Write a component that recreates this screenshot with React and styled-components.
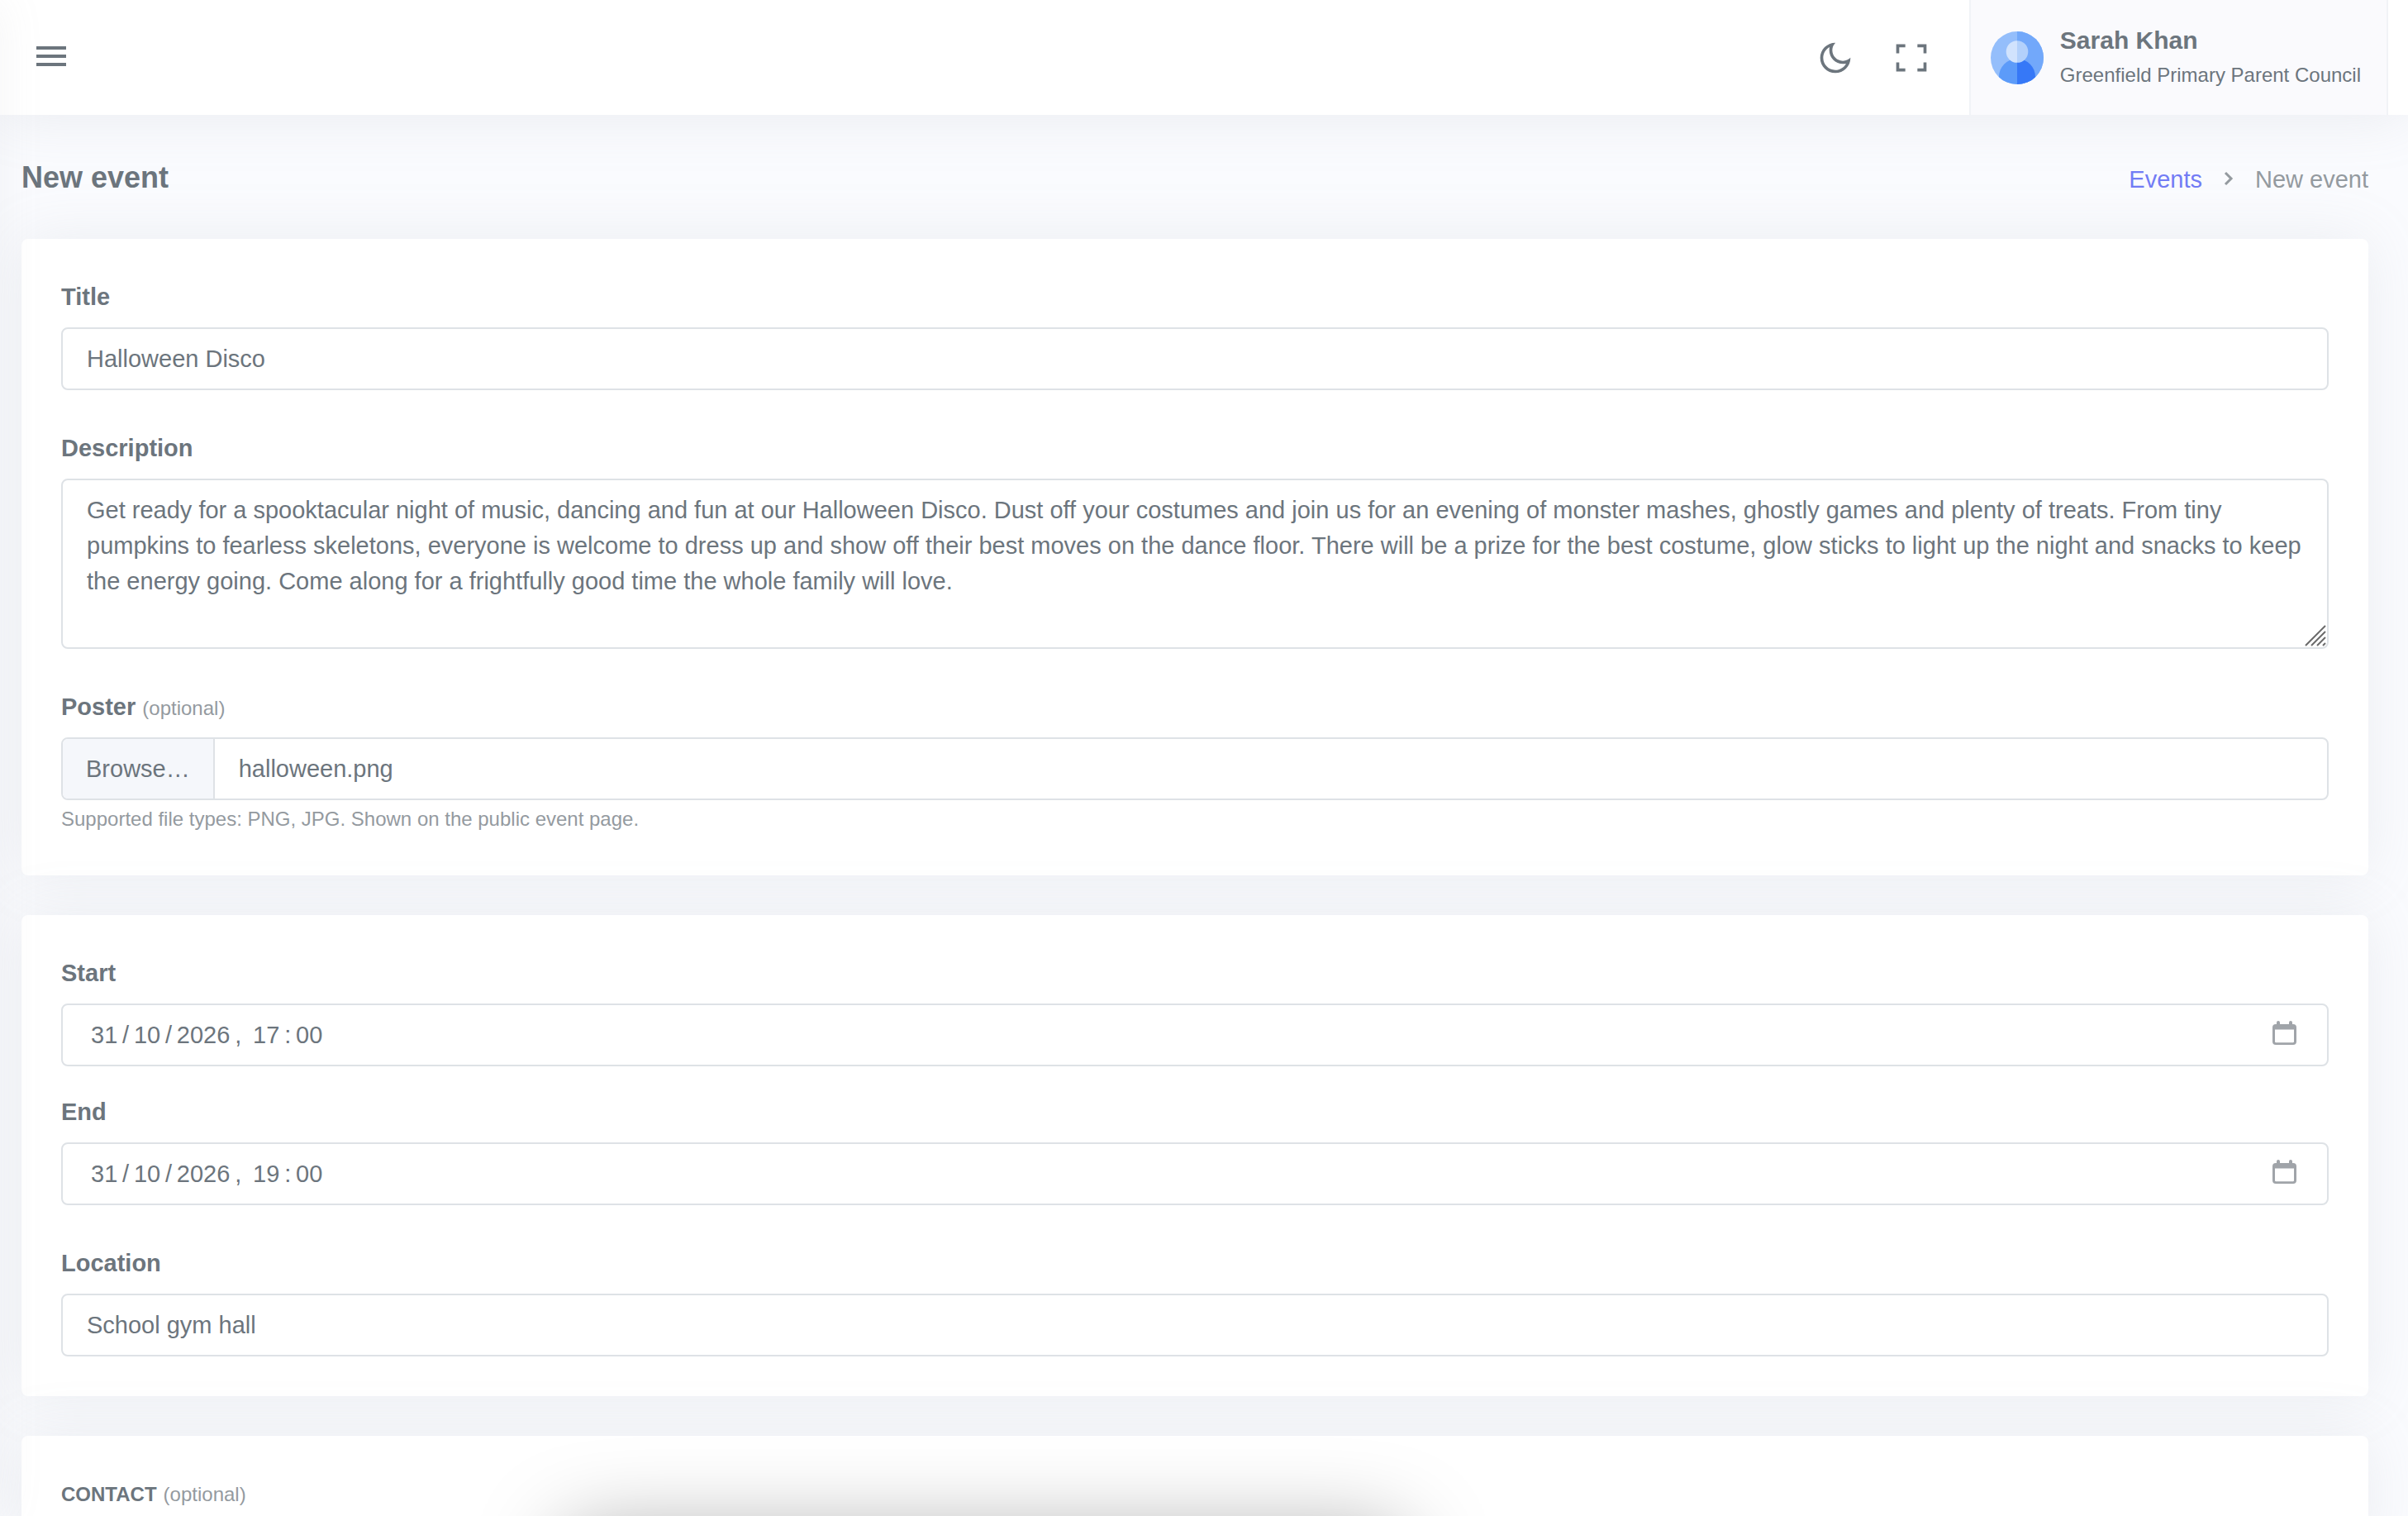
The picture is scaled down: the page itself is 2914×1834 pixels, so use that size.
import React, { useState } from "react";
import styled, { createGlobalStyle } from "styled-components";
import { RiFullscreenLine, RiMoonLine } from "react-icons/ri";

const color = {
  text: "#6c757d",
  muted: "#949a9f",
  border: "#dee2e6",
  link: "#727cf5",
  page: "#fafbfe",
};

const GlobalStyle = createGlobalStyle`
  *, *::before, *::after { box-sizing: border-box; }
  html { scrollbar-width: none; }
  body {
    margin: 0;
    background: ${color.page};
    color: ${color.text};
    font-family: "Liberation Sans", Arial, sans-serif;
    font-size: 29px;
    line-height: 43px;
  }
  input, textarea, button { font: inherit; color: inherit; }
`;

const Topbar = styled.header`
  position: relative;
  display: flex;
  align-items: center;
  height: 139px;
  padding: 0 24px 0 38px;
  background: #fff;
  box-shadow: 0 0 70px 0 rgba(154, 161, 171, 0.18);
`;

const IconButton = styled.button`
  display: flex;
  align-items: center;
  justify-content: center;
  width: 48px;
  height: 48px;
  padding: 0;
  border: 0;
  background: none;
  cursor: pointer;
`;

const TopActions = styled.div`
  display: flex;
  gap: 44px;
  margin-left: auto;
  margin-right: 46px;
`;

const Account = styled.button`
  display: flex;
  align-items: center;
  gap: 20px;
  height: 100%;
  padding: 0 31px 0 24px;
  border: 0 solid #f1f3f7;
  border-width: 0 2px;
  background: #fafafd;
  text-align: left;
  cursor: pointer;
`;

const AccountText = styled.span`
  display: flex;
  flex-direction: column;
  gap: 4px;
`;

const AccountName = styled.span`
  font-size: 30px;
  font-weight: 700;
  line-height: 38px;
`;

const AccountGroup = styled.span`
  font-size: 24px;
  line-height: 38px;
`;

const Page = styled.main`
  padding: 0 48px 48px 26px;
`;

const PageHead = styled.div`
  display: flex;
  align-items: baseline;
  justify-content: space-between;
  padding: 55px 0 51px;
  line-height: 42px;
`;

const PageTitle = styled.h1`
  margin: 0;
  font-size: 36px;
  font-weight: 700;
`;

const Breadcrumb = styled.nav`
  display: flex;
  align-items: center;
  gap: 24px;
  color: ${color.muted};
`;

const CrumbLink = styled.a`
  color: ${color.link};
  text-decoration: none;
`;

const Form = styled.form`
  display: flex;
  flex-direction: column;
  gap: 48px;
`;

const Card = styled.section`
  display: flex;
  flex-direction: column;
  gap: 48px;
  padding: 48px;
  border-radius: 8px;
  background: #fff;
  box-shadow: 0 0 70px 0 rgba(154, 161, 171, 0.15);
`;

const Pair = styled.div`
  display: flex;
  flex-direction: column;
  gap: 33px;
`;

const Field = styled.div`
  display: flex;
  flex-direction: column;
`;

const Label = styled.label`
  padding-top: 1px;
  margin-bottom: 15px;
  font-weight: 700;
`;

const Small = styled.span`
  color: ${(p) => (p.$strong ? color.text : color.muted)};
  font-size: 24px;
  font-weight: ${(p) => (p.$strong ? 700 : 400)};
  line-height: 1;
`;

const Heading = styled.h2`
  margin: 0;
  font-size: 29px;
  font-weight: 400;
`;

const Hint = styled.div``;

const TextInput = styled.input`
  width: 100%;
  height: 76px;
  padding: 0 29px;
  border: 2px solid ${color.border};
  border-radius: 8px;
  background: #fff;
  outline: 0;
`;

const TextArea = styled.textarea`
  display: block;
  width: 100%;
  height: 206px;
  padding: 15px 24px 15px 29px;
  border: 2px solid ${color.border};
  border-radius: 8px;
  background: #fff;
  outline: 0;
  resize: none;
`;

const TextAreaFrame = styled.div`
  position: relative;
`;

const ResizeGrip = styled.svg`
  position: absolute;
  right: 3px;
  bottom: 3px;
  pointer-events: none;
`;

const Group = styled.div`
  display: flex;
  height: 76px;
  border: 2px solid ${color.border};
  border-radius: 8px;
  background: #fff;
  overflow: hidden;
`;

const BrowseButton = styled.button`
  padding: 0 28px;
  border: 0;
  border-right: 2px solid ${color.border};
  background: #f5f7fb;
  cursor: pointer;
`;

const GroupInput = styled.input`
  flex: 1;
  min-width: 0;
  padding: 0 29px;
  padding-left: ${(p) => (p.$date ? "34px" : "29px")};
  border: 0;
  background: transparent;
  outline: 0;
`;

const PickerButton = styled(IconButton)`
  align-self: center;
  margin-right: 28px;
  padding-bottom: 5px;
`;

const Toast = styled.div`
  position: fixed;
  top: calc(100% + 20px);
  left: 682px;
  width: 1016px;
  height: 120px;
  border-radius: 24px;
  box-shadow: 0 0 104px rgba(0, 0, 0, 0.35);
`;

/* Soft edge of the navigation drawer, which rests outside the left side. */
const Drawer = styled.aside`
  position: fixed;
  top: 0;
  bottom: 0;
  right: 100%;
  width: 520px;
  box-shadow: 0 0 52px 0 rgba(154, 161, 171, 0.1);
  pointer-events: none;
`;

function MenuIcon() {
  return (
    <svg width="48" height="48" viewBox="0 0 48 48" fill={color.text} aria-hidden="true">
      <path d="M6 10h36v4H6zM6 20h36v4H6zM6 30h36v4H6z" />
    </svg>
  );
}

function ChevronIcon() {
  return (
    <svg width="16" height="24" viewBox="0 0 16 24" fill="none" stroke={color.muted} strokeWidth="3" aria-hidden="true">
      <path d="M4 4l7 7-7 7" />
    </svg>
  );
}

function CalendarIcon() {
  return (
    <svg width="29" height="29" viewBox="0 0 29 29" aria-hidden="true">
      <path
        fill="#a0a4a9"
        fillRule="evenodd"
        d="M5 4V2a2 2 0 0 1 4 0v2h11V2a2 2 0 0 1 4 0v2h1a4 4 0 0 1 4 4v17a4 4 0 0 1-4 4H4a4 4 0 0 1-4-4V8a4 4 0 0 1 4-4zM3 10.500V25q0 1.200 1.200 1.200h20.600Q26 26.200 26 25V10.500z"
      />
    </svg>
  );
}

function Avatar() {
  return (
    <svg width="64" height="64" viewBox="0 0 64 64" aria-hidden="true">
      <defs>
        <clipPath id="avatar-disc"><circle cx="32" cy="32" r="32" /></clipPath>
        <clipPath id="avatar-right"><rect x="32" width="32" height="64" /></clipPath>
      </defs>
      <g clipPath="url(#avatar-disc)">
        <rect width="64" height="64" fill="#94befb" />
        <path d="M10 64V55a22 22 0 0 1 44 0v9z" fill="#5c9bf9" />
        <circle cx="32" cy="24.500" r="13.300" fill="#d1e3fd" />
        <g clipPath="url(#avatar-right)">
          <rect width="64" height="64" fill="#72a8fa" />
          <path d="M10 64V55a22 22 0 0 1 44 0v9z" fill="#3678f7" />
          <circle cx="32" cy="24.500" r="13.300" fill="#b3d1fb" />
        </g>
      </g>
    </svg>
  );
}

function DateField({ id, label, initial }) {
  const [value, setValue] = useState(initial);
  return (
    <Field>
      <Label htmlFor={id}>{label}</Label>
      <Group>
        <GroupInput $date id={id} value={value} onChange={(e) => setValue(e.target.value)} />
        <PickerButton type="button" aria-label={`Pick ${label.toLowerCase()} date`}>
          <CalendarIcon />
        </PickerButton>
      </Group>
    </Field>
  );
}

const description =
  "Get ready for a spooktacular night of music, dancing and fun at our Halloween Disco. Dust off your costumes and join us for an evening of monster mashes, ghostly games and plenty of treats. From tiny pumpkins to fearless skeletons, everyone is welcome to dress up and show off their best moves on the dance floor. There will be a prize for the best costume, glow sticks to light up the night and snacks to keep the energy going. Come along for a frightfully good time the whole family will love.";

export default function App() {
  return (
    <>
      <GlobalStyle />
      <Topbar>
        <IconButton type="button" aria-label="Menu"><MenuIcon /></IconButton>
        <TopActions>
          <IconButton type="button" aria-label="Dark mode"><RiMoonLine size={44} /></IconButton>
          <IconButton type="button" aria-label="Fullscreen"><RiFullscreenLine size={44} /></IconButton>
        </TopActions>
        <Account type="button">
          <Avatar />
          <AccountText>
            <AccountName>Sarah Khan</AccountName>
            <AccountGroup>Greenfield Primary Parent Council</AccountGroup>
          </AccountText>
        </Account>
      </Topbar>
      <Page>
        <PageHead>
          <PageTitle>New event</PageTitle>
          <Breadcrumb aria-label="Breadcrumb">
            <CrumbLink href="#events">Events</CrumbLink>
            <ChevronIcon />
            <span>New event</span>
          </Breadcrumb>
        </PageHead>
        <Form>
          <Card>
            <Field>
              <Label htmlFor="title">Title</Label>
              <TextInput id="title" defaultValue="Halloween Disco" />
            </Field>
            <Field>
              <Label htmlFor="description">Description</Label>
              <TextAreaFrame>
                <TextArea id="description" defaultValue={description} />
                <ResizeGrip width="26" height="26" viewBox="0 0 26 26" stroke="#6b6b6b" strokeWidth="2" aria-hidden="true">
                  <path d="M1 25L25 1M8 25L25 8M15 25L25 15M22 25L25 22" />
                </ResizeGrip>
              </TextAreaFrame>
            </Field>
            <Field>
              <Label htmlFor="poster">Poster <Small>(optional)</Small></Label>
              <Group>
                <BrowseButton type="button">Browse…</BrowseButton>
                <GroupInput id="poster" value="halloween.png" readOnly />
              </Group>
              <Hint><Small>Supported file types: PNG, JPG. Shown on the public event page.</Small></Hint>
            </Field>
          </Card>
          <Card>
            <Pair>
              <DateField id="start" label="Start" initial={"31\u2009/\u200910\u2009/\u20092026\u2009,\u2009 17\u2009:\u200900"} />
              <DateField id="end" label="End" initial={"31\u2009/\u200910\u2009/\u20092026\u2009,\u2009 19\u2009:\u200900"} />
            </Pair>
            <Field>
              <Label htmlFor="location">Location</Label>
              <TextInput id="location" defaultValue="School gym hall" />
            </Field>
          </Card>
          <Card>
            <Heading><Small $strong>CONTACT</Small> <Small>(optional)</Small></Heading>
          </Card>
        </Form>
      </Page>
      <Drawer aria-hidden="true" />
      <Toast role="status" />
    </>
  );
}
